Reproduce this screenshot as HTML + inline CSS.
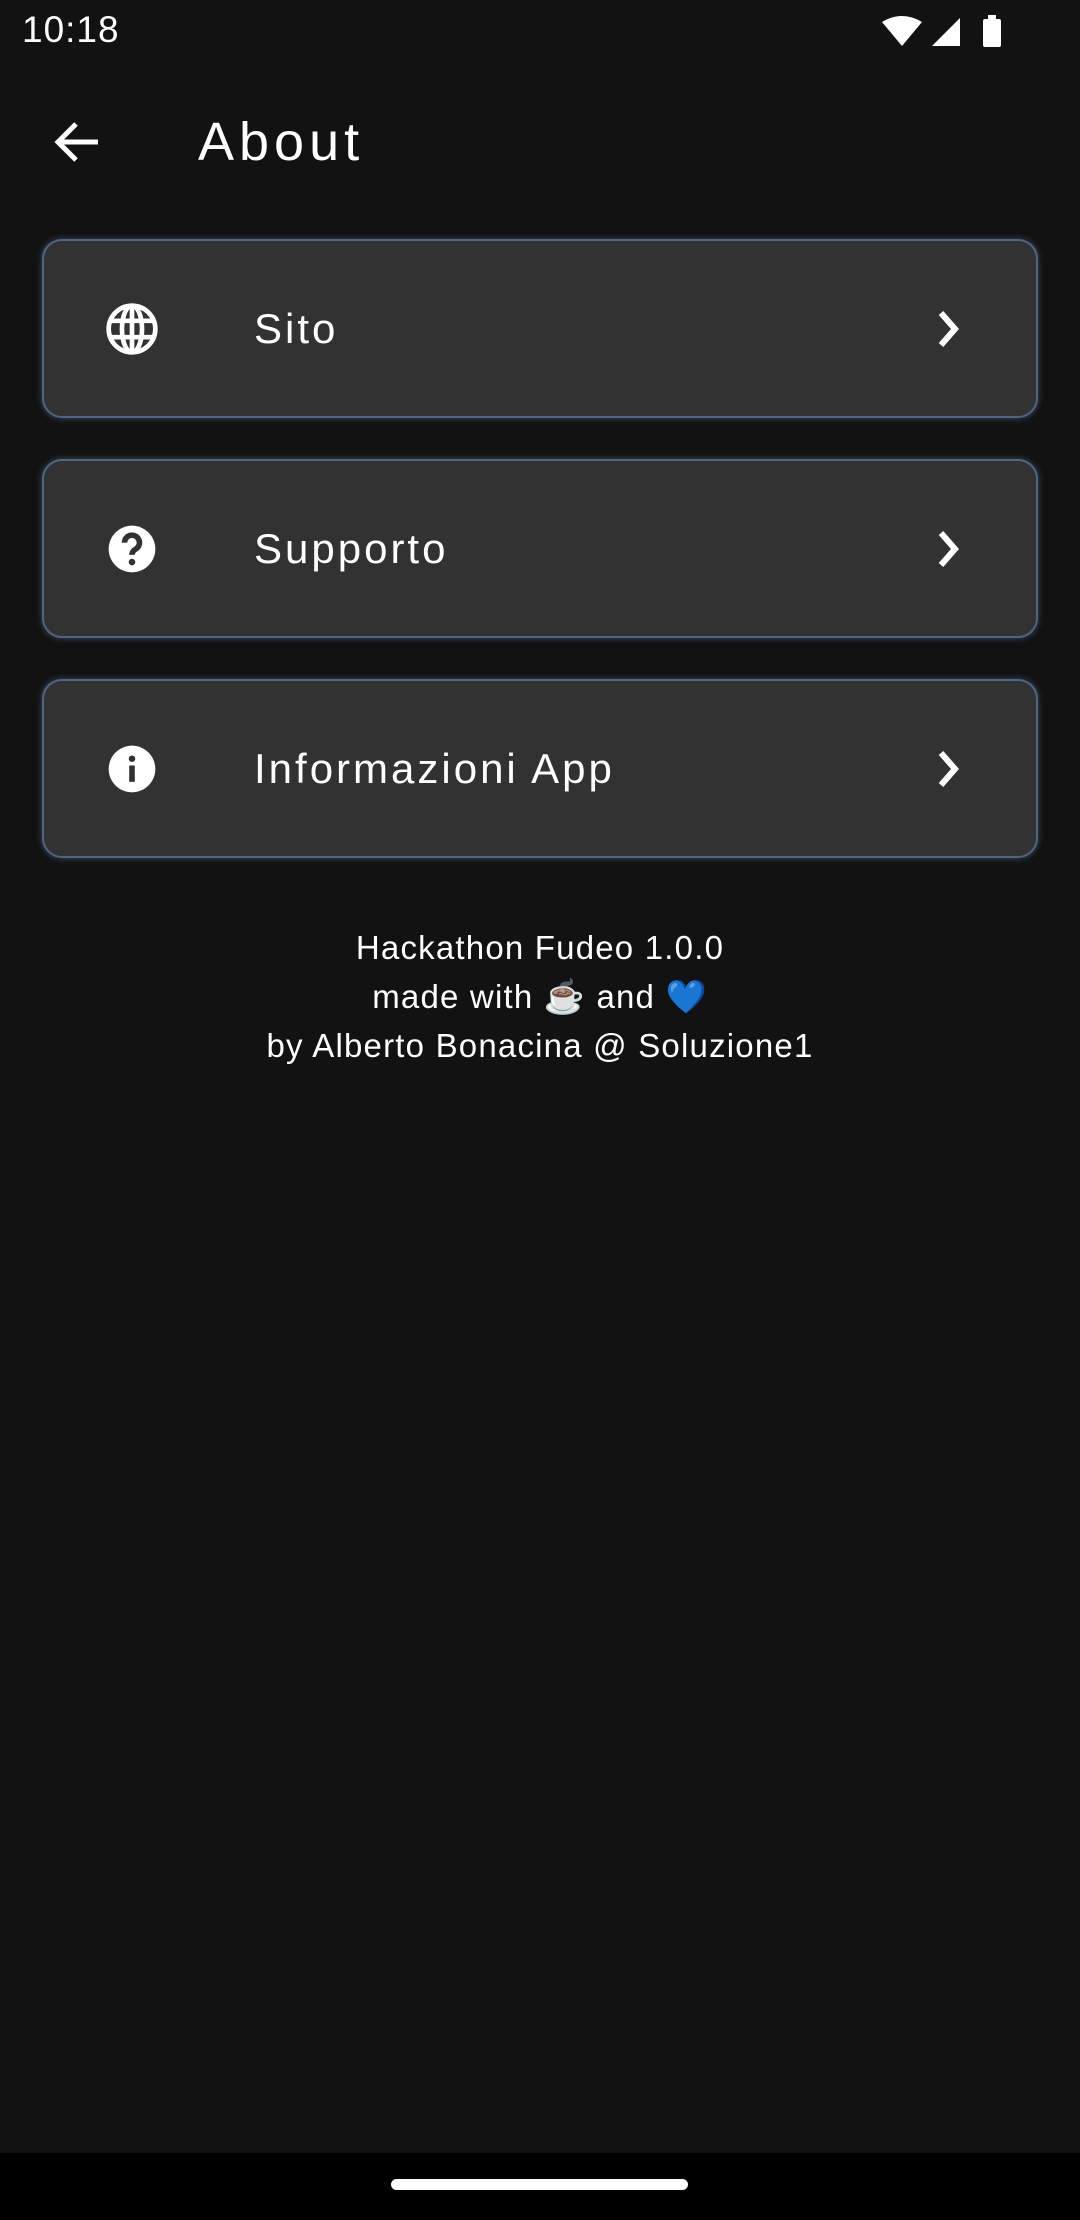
<!DOCTYPE html>
<html><head><meta charset="utf-8"><style>
*{margin:0;padding:0;box-sizing:border-box}
body{width:1080px;height:2220px;background:#121212;position:relative;overflow:hidden;font-family:"Liberation Sans",sans-serif;color:#fff}
.abs{position:absolute}
.card{position:absolute;left:42px;width:996px;height:179px;background:#323232;border:2px solid #4f6580;border-radius:20px;box-shadow:0 0 6px 1px rgba(90,120,160,.45)}
.card .lbl{position:absolute;left:210px;top:0;line-height:175px;font-size:42px;letter-spacing:3px}
.card .ic{position:absolute;left:60px;top:60px}
.card .ch{position:absolute;left:887px;top:66px}
.foot{position:absolute;left:0;width:1080px;text-align:center;font-size:33px;line-height:49px;top:923px;letter-spacing:1.2px}
</style></head><body>
<div class="abs" style="left:22px;top:9px;font-size:37px;letter-spacing:1px">10:18</div>
<svg class="abs" style="left:882px;top:14px" width="130" height="38" viewBox="0 0 130 38">
<path d="M0 8 Q20 -4 40 8 L20 32Z" fill="#fff"/>
<path d="M50 32 L78 4 L78 32Z" fill="#fff"/>
<rect x="101" y="5" width="18" height="28" rx="2" fill="#fff"/><rect x="106" y="1" width="8" height="5" fill="#fff"/>
</svg>
<svg class="abs" style="left:50px;top:118px" width="52" height="48" viewBox="0 0 52 48"><path d="M48 24H8M26 6L8 24l18 18" stroke="#fff" stroke-width="5" fill="none"/></svg>
<div class="abs" style="left:198px;top:108px;font-size:54px;line-height:68px;letter-spacing:5px">About</div>

<div class="card" style="top:239px">
<svg class="ic" width="56" height="56" viewBox="0 0 24 24"><g fill="none" stroke="#fff" stroke-width="2"><circle cx="12" cy="12" r="10"/><ellipse cx="12" cy="12" rx="4.3" ry="10"/><path d="M2 8.5h20M2 15.5h20M12 2v20"/></g></svg>
<div class="lbl">Sito</div>
<svg class="ch" width="36" height="44" viewBox="0 0 36 44"><path d="M10 6l14 16-14 16" stroke="#fff" stroke-width="6" fill="none"/></svg>
</div>
<div class="card" style="top:459px">
<svg class="ic" width="56" height="56" viewBox="0 0 24 24"><circle cx="12" cy="12" r="10" fill="#fff"/><path d="M8.8 9.3a3.2 3.2 0 1 1 4.7 2.8c-1 .6-1.5 1.2-1.5 2.4" stroke="#323232" stroke-width="2.4" fill="none"/><circle cx="12" cy="17.6" r="1.4" fill="#323232"/></svg>
<div class="lbl">Supporto</div>
<svg class="ch" width="36" height="44" viewBox="0 0 36 44"><path d="M10 6l14 16-14 16" stroke="#fff" stroke-width="6" fill="none"/></svg>
</div>
<div class="card" style="top:679px">
<svg class="ic" width="56" height="56" viewBox="0 0 24 24"><circle cx="12" cy="12" r="10" fill="#fff"/><rect x="10.8" y="10.5" width="2.4" height="7" fill="#323232"/><circle cx="12" cy="7.6" r="1.4" fill="#323232"/></svg>
<div class="lbl">Informazioni App</div>
<svg class="ch" width="36" height="44" viewBox="0 0 36 44"><path d="M10 6l14 16-14 16" stroke="#fff" stroke-width="6" fill="none"/></svg>
</div>

<div class="foot">Hackathon Fudeo 1.0.0<br>made with ☕ and 💙<br>by Alberto Bonacina @ Soluzione1</div>

<div class="abs" style="left:0;top:2153px;width:1080px;height:67px;background:#000"></div>
<div class="abs" style="left:391px;top:2179px;width:297px;height:11px;border-radius:6px;background:#fff"></div>
</body></html>
